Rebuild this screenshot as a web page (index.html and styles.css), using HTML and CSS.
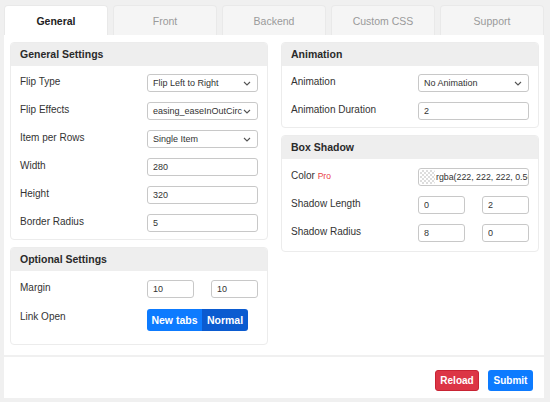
FILE: index.html
```html
<!DOCTYPE html>
<html>
<head>
    <title>Flipbox Settings</title>
    <link rel="stylesheet" href="styles.css">
</head>
<body>

<div class="settings">
    <div class="tabs">
        <div class="tab active">General</div>
        <div class="tab">Front</div>
        <div class="tab">Backend</div>
        <div class="tab">Custom CSS</div>
        <div class="tab">Support</div>
    </div>

    <div class="tab-panel">
        <div class="col">
            <div class="card">
                <div class="card-header">General Settings</div>
                <div class="card-body">
                    <div class="row">
                        <label>Flip Type</label>
                        <div class="select">Flip Left to Right</div>
                    </div>
                    <div class="row">
                        <label>Flip Effects</label>
                        <div class="select">easing_easeInOutCirc</div>
                    </div>
                    <div class="row">
                        <label>Item per Rows</label>
                        <div class="select">Single Item</div>
                    </div>
                    <div class="row">
                        <label>Width</label>
                        <input type="text" value="280">
                    </div>
                    <div class="row">
                        <label>Height</label>
                        <input type="text" value="320">
                    </div>
                    <div class="row">
                        <label>Border Radius</label>
                        <input type="text" value="5">
                    </div>
                </div>
            </div>

            <div class="card">
                <div class="card-header">Optional Settings</div>
                <div class="card-body roomy">
                    <div class="row">
                        <label>Margin</label>
                        <div class="pair">
                            <input type="text" value="10">
                            <input type="text" value="10">
                        </div>
                    </div>
                    <div class="row row-tall">
                        <label>Link Open</label>
                        <div class="btn-group">
                            <button class="seg">New tabs</button>
                            <button class="seg on">Normal</button>
                        </div>
                    </div>
                </div>
            </div>
        </div>

        <div class="col">
            <div class="card">
                <div class="card-header">Animation</div>
                <div class="card-body">
                    <div class="row">
                        <label>Animation</label>
                        <div class="select">No Animation</div>
                    </div>
                    <div class="row">
                        <label>Animation Duration</label>
                        <input type="text" value="2">
                    </div>
                </div>
            </div>

            <div class="card">
                <div class="card-header">Box Shadow</div>
                <div class="card-body shadow-body">
                    <div class="row">
                        <label>Color <span class="pro">Pro</span></label>
                        <div class="color-input">
                            <span class="swatch"></span>
                            <span class="color-value">rgba(222, 222, 222, 0.56)</span>
                        </div>
                    </div>
                    <div class="row">
                        <label>Shadow Length</label>
                        <div class="pair">
                            <input type="text" value="0">
                            <input type="text" value="2">
                        </div>
                    </div>
                    <div class="row">
                        <label>Shadow Radius</label>
                        <div class="pair">
                            <input type="text" value="8">
                            <input type="text" value="0">
                        </div>
                    </div>
                </div>
            </div>
        </div>
    </div>

    <div class="footer">
        <button class="btn btn-reload">Reload</button>
        <button class="btn btn-submit">Submit</button>
    </div>
</div>

</body>
</html>
```

FILE: styles.css
```css
* { margin: 0; padding: 0; box-sizing: border-box; }

body {
    font-family: "Liberation Sans", Arial, sans-serif;
    font-size: 10px;
    color: #333;
    background: #f0f0f0;
}

.settings {
    margin: 5px 6px 4px 4px;
}

/* Tabs along the top */
.tabs {
    display: flex;
    gap: 5px;
}

.tab {
    flex: 1;
    height: 30px;
    display: flex;
    align-items: center;
    justify-content: center;
    background: #f5f5f5;
    border: 1px solid #e9e9e9;
    border-bottom: none;
    border-radius: 4px 4px 0 0;
    color: #9a9a9a;
    font-size: 10.5px;
}

.tab.active {
    background: #fff;
    color: #222;
    font-weight: bold;
}

/* Panel with the two columns */
.tab-panel {
    background: #fff;
    height: 320px;
    padding: 7px 5px 11px 6px;
    display: grid;
    grid-template-columns: 1fr 1fr;
    gap: 13px;
    align-items: start;
}

.col {
    display: flex;
    flex-direction: column;
    gap: 7px;
}

.card {
    border: 1px solid #ececec;
    border-radius: 4px;
    overflow: hidden;
}

.card-header {
    height: 23px;
    line-height: 23px;
    padding-left: 9px;
    background: #eeeeee;
    color: #2a2a2a;
    font-size: 10.5px;
    font-weight: bold;
}

.card-body {
    padding: 8px 9px 7px 9px;
    display: flex;
    flex-direction: column;
    gap: 10px;
}

.card-body.roomy {
    padding-top: 9px;
    padding-bottom: 13px;
    gap: 11px;
}

.card-body.shadow-body {
    padding-top: 9px;
    padding-bottom: 9px;
}

.row {
    display: grid;
    grid-template-columns: 1fr 111px;
    align-items: center;
    height: 18px;
}

.row label {
    align-self: start;
    line-height: 16px;
}

.row-tall {
    height: 22px;
}

.pro {
    color: #e8403f;
    font-size: 8.5px;
}

input, .select, .color-input {
    height: 18px;
    width: 100%;
    border: 1px solid #c8c8c8;
    border-radius: 3px;
    background: #fff;
    font-family: inherit;
    font-size: 9px;
    color: #333;
    padding: 0 5px;
    outline: none;
}

.select {
    display: flex;
    align-items: center;
    background: #fff url("data:image/svg+xml;utf8,<svg xmlns='http://www.w3.org/2000/svg' width='8' height='5' viewBox='0 0 8 5'><path d='M1 1l3 3 3-3' fill='none' stroke='%23555' stroke-width='1.1'/></svg>") no-repeat right 6px center;
    white-space: nowrap;
    overflow: hidden;
}

.pair {
    display: flex;
    justify-content: space-between;
}

.pair input {
    width: 47px;
}

.color-input {
    display: flex;
    align-items: center;
    padding: 0 0 0 1px;
    overflow: hidden;
    white-space: nowrap;
    font-size: 8.8px;
}

.swatch {
    flex: none;
    width: 15px;
    height: 14px;
    margin-right: 1px;
    background-color: #fff;
    background-image:
        linear-gradient(45deg, #ddd 25%, transparent 25%, transparent 75%, #ddd 75%),
        linear-gradient(45deg, #ddd 25%, transparent 25%, transparent 75%, #ddd 75%);
    background-size: 4px 4px;
    background-position: 0 0, 2px 2px;
    border-radius: 2px;
}

.btn-group {
    display: flex;
    width: 101px;
    height: 22px;
    border-radius: 3px;
    overflow: hidden;
}

.seg {
    border: none;
    color: #fff;
    font-family: inherit;
    font-size: 10.5px;
    font-weight: bold;
    background: #0d7bff;
    width: 55px;
}

.seg.on {
    background: #0b5bd0;
    width: 46px;
}

/* Bottom bar */
.footer {
    margin-top: 2px;
    background: #fff;
    height: 41px;
    padding: 13px 11px 7px;
    display: flex;
    justify-content: flex-end;
    align-items: flex-start;
    gap: 9px;
}

.btn {
    height: 21px;
    padding: 0;
    border: 1px solid transparent;
    border-radius: 3px;
    color: #fff;
    font-family: inherit;
    font-size: 10px;
    font-weight: bold;
    cursor: pointer;
}

.btn-reload {
    background: #dc3545;
    border-color: #c82333;
    width: 44px;
}

.btn-submit {
    background: #0d7bff;
    width: 45px;
}
```
